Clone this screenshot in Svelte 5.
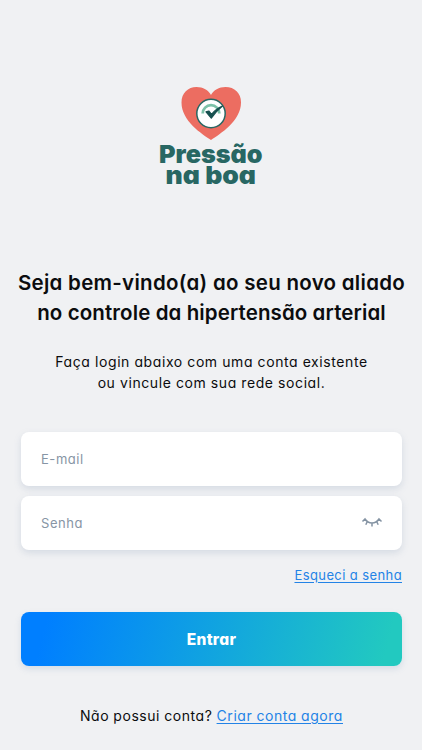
<script lang="ts">
	let email = $state('');
	let password = $state('');
	let showPassword = $state(false);

	const title = ['Seja bem-vindo(a) ao seu novo aliado', 'no controle da hipertensão arterial'];
	const intro = ['Faça login abaixo com uma conta existente', 'ou vincule com sua rede social.'];
</script>

<main class="login">
	<svg class="logo" viewBox="0 0 108 112" role="img" aria-label="Pressão na boa">
		<path
			class="heart"
			d="M54 56C45 50 24.500 37 24.500 18.500C24.500 9 31 3 39.500 3C46 3 51.500 6 54 11C56.500 6 62 3 68.500 3C77.500 3 84 9 84 18.500C84 37 63 50 54 56Z"
		/>
		<circle class="dial" cx="54" cy="29.500" r="14.200" />
		<path class="gauge" d="M45.700 29.500A8.300 8.300 0 0 1 62.300 29.500" />
		<path class="tick" d="M49 27.800L51.800 27L54.500 30.300C57.500 26.500 61 23.800 65.500 22C61 25.500 57.500 29.500 54.300 34.200Z" />
		<text x="2" y="78.800" textLength="103.500" lengthAdjust="spacingAndGlyphs">Pressão</text>
		<text x="8.500" y="100" textLength="90.500" lengthAdjust="spacingAndGlyphs">na boa</text>
	</svg>

	<h1>
		{#each title as line}
			<span>{line}</span>
		{/each}
	</h1>

	<p class="intro">
		{#each intro as line}
			<span>{line}</span>
		{/each}
	</p>

	<form onsubmit={(e) => e.preventDefault()}>
		<label class="field">
			<input type="email" placeholder="E-mail" bind:value={email} />
		</label>

		<label class="field">
			<input type={showPassword ? 'text' : 'password'} placeholder="Senha" bind:value={password} />
			<button
				class="eye"
				type="button"
				aria-label="Mostrar senha"
				onclick={() => (showPassword = !showPassword)}
			>
				<svg viewBox="0 0 22 12">
					<path d="M1.500 4.500L4 2C7.500 7.300 14.500 7.300 18 2L20.500 4.500M6.200 4.700L4.800 7.700M11 6V9.500M15.800 4.700L17.200 7.700" />
				</svg>
			</button>
		</label>

		<a class="forgot" href="#senha">Esqueci a senha</a>

		<button class="submit" type="submit">Entrar</button>
	</form>

	<p class="signup"><span>Não possui conta?</span> <a href="#criar">Criar conta agora</a></p>
</main>

<style>
	:global(body) {
		background: #f0f1f3;
	}

	.login {
		box-sizing: border-box;
		width: 100%;
		height: 750px;
		padding: 84px 20px 0 21px;
		display: flex;
		flex-direction: column;
		align-items: center;
		overflow: hidden;
		color: #0b0c0e;
		font-family: Inter, 'Open Sans', sans-serif;
		font-feature-settings: 'cv11' 1;
	}

	.logo {
		width: 108px;
		height: 112px;
		margin-right: 2px;
		flex: none;
		overflow: visible;
	}

	.logo text {
		font-size: 25px;
		font-weight: 900;
		fill: #286763;
	}

	.heart {
		fill: #ec6d61;
	}

	.dial {
		fill: #fff;
		stroke: #286763;
		stroke-width: 1.5;
	}

	.gauge {
		fill: none;
		stroke: #7cc1a8;
		stroke-width: 2.8;
	}

	.tick {
		fill: #17504f;
		stroke: #17504f;
		stroke-width: 1.2;
		stroke-linejoin: round;
	}

	h1 {
		margin: 72px -20px 0;
		font-size: 20.5px;
		font-weight: 600;
		line-height: 29.5px;
		letter-spacing: 0.1px;
		text-align: center;
		white-space: nowrap;
	}

	h1 span,
	.intro span {
		display: block;
	}

	h1 span:first-child {
		letter-spacing: 0.28px;
	}

	.intro {
		margin: 25px 0 0;
		font-size: 14px;
		line-height: 20.5px;
		letter-spacing: 0.58px;
		text-align: center;
		white-space: nowrap;
	}

	form {
		width: 100%;
		margin-top: 39px;
		display: flex;
		flex-direction: column;
	}

	.field {
		box-sizing: border-box;
		height: 54px;
		margin-bottom: 10px;
		padding: 0 19px 0 20px;
		display: flex;
		align-items: center;
		background: #fff;
		border-radius: 8px;
		box-shadow: 0 3px 7px rgba(120, 140, 175, 0.22);
	}

	input {
		flex: 1;
		min-width: 0;
		padding: 0;
		border: 0;
		outline: 0;
		background: none;
		font: inherit;
		font-feature-settings: inherit;
		font-size: 13px;
		letter-spacing: 0.55px;
		color: #0b0c0e;
	}

	input::placeholder {
		color: #8795a5;
		opacity: 1;
	}

	.eye {
		width: 22px;
		height: 12px;
		padding: 0;
		border: 0;
		background: none;
	}

	.eye svg {
		display: block;
		fill: none;
		stroke: #8493a3;
		stroke-width: 1.5;
	}

	a {
		color: #2383e6;
		text-decoration: underline;
		text-underline-offset: 1.5px;
	}

	.forgot {
		align-self: flex-end;
		margin-top: 5px;
		font-size: 13px;
		line-height: 20px;
		letter-spacing: 0.4px;
	}

	.submit {
		height: 54px;
		margin-top: 27px;
		border: 0;
		border-radius: 8px;
		background: linear-gradient(105deg, #007fff 7%, #22c9c0 95%);
		box-shadow: 0 3px 6px rgba(120, 150, 185, 0.22);
		color: #fff;
		font: inherit;
		font-feature-settings: inherit;
		font-size: 15.5px;
		font-weight: 800;
		letter-spacing: 0.3px;
	}

	.signup {
		margin: 40px 0 0;
		font-size: 14px;
		line-height: 20px;
		letter-spacing: 0.55px;
		word-spacing: -0.3px;
		white-space: nowrap;
	}
</style>
